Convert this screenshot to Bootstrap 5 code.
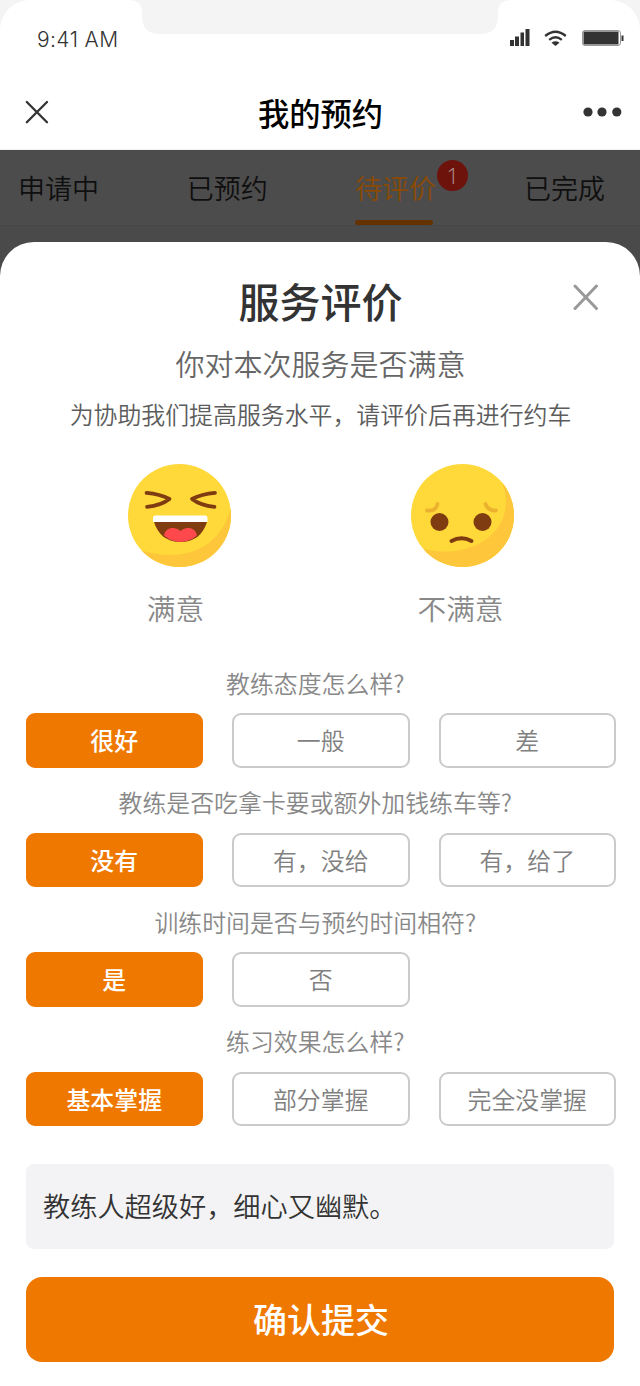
<!DOCTYPE html>
<html lang="zh-CN">
<head>
<meta charset="utf-8">
<meta name="viewport" content="width=device-width, initial-scale=1">
<title>我的预约</title>
<link href="https://cdn.jsdelivr.net/npm/bootstrap@5.3.0/dist/css/bootstrap.min.css" rel="stylesheet">
<style>
:root{--brand:#ef7800;--ink:#333;--soft:#888}
body{font-family:"Noto Sans CJK SC",sans-serif;background:#f4f4f4;color:var(--ink)}
.screen{height:1386px;overflow:hidden}
.top{border-radius:30px 30px 0 0}
.backdrop-dim{background:#4a4a4a}
.status{height:77px;padding:0 16px 0 37px}
.clock{font:300 21px/79px Inter,sans-serif;letter-spacing:.4px}
.notch{left:130px;top:0}
.topbar{height:73px;padding:0 18px 0 24px;border-bottom:1px solid #f1f1f1}
.topbar h1{font-size:31.3px;line-height:40px;font-weight:500;color:#000;left:1px;right:0;top:16px}
.tabs{height:76px;padding:0 35px 0 18px;background:#4c4c4c;border-bottom:1px solid #474747}
.tabs .nav-link{padding:0;font-size:27px;line-height:76px;font-weight:350;color:#0f0f0f}
.tabs .nav-link.active{color:#8a4a05}
.tabs .active::after{content:"";position:absolute;left:0;top:70px;width:78px;height:5px;border-radius:3px;background:#633200}
.count{left:82px;top:10px;width:31px;height:31px;font:300 22px/31px "Open Sans",sans-serif;background:#6e120c;color:#b09592}
.sheet{margin-top:16px;height:1144px;border-radius:34px 34px 0 0;padding:31px 26px 0}
.sheet h2{font-size:41px;line-height:54px;font-weight:500;padding-left:1px}
.dismiss{right:40px;top:42px}
.lead-q{font-size:29px;line-height:40px;font-weight:350;color:#666;margin-top:16px;padding-left:1px}
.note{font-size:23.9px;line-height:34px;font-weight:350;color:#5c5c5c;margin-top:14px;padding-left:1px;white-space:nowrap}
.faces{margin:33px 100px 0 102px}
.face-label{font-size:28.7px;line-height:40px;font-weight:350;color:var(--soft);margin:21px -10px 0}
.questions{margin:37.500px -1px 0 -.5px}
.ask{height:47.5px;padding:0 10px 0 0;font-size:23.9px;line-height:33px;font-weight:350;color:var(--soft)}
.choices{display:grid;grid-template-columns:repeat(3,177.5px);gap:29px;margin-bottom:17.5px}
.choices .btn{height:54.5px;padding:0;border:2px solid #cbcbcb;border-radius:9px;font-size:23.9px;line-height:50px;font-weight:350;color:#808080}
.choices .btn.active{background:var(--brand);border-color:var(--brand);color:#fff;font-weight:500}
.comment{height:85px;margin-top:37.500px;padding:0 17px;border-radius:8px;background:#f3f3f5;font-size:27.2px;line-height:83px;font-weight:350}
.submit{height:85px;margin-top:28px;padding:6px 0 6px 2px;border:0;border-radius:16px;background:var(--brand);color:#fff;font-size:34px;line-height:50px;font-weight:500}
</style>
</head>
<body>
<main class="screen">
  <header class="top bg-white">
    <div class="status position-relative d-flex justify-content-between">
      <span class="clock">9:41 AM</span>
      <svg class="notch position-absolute" width="380" height="34" viewBox="0 0 380 34"><path d="M0 0Q12 1 12 12V16Q12 34 30 34H350Q368 34 368 16V12Q368 1 380 0Z" fill="#f4f4f4"/></svg>
      <svg width="116" height="24" viewBox="508 26 116 24" style="margin-top:26px" fill="#333">
        <path d="M510 40h4v6h-4zM515 36.500h4v9.500h-4zM520.500 32.500h3.500v13.500h-3.500zM525.500 29h4v17h-4z"/>
        <g fill="none" stroke="#333" stroke-width="2.300"><path d="M545.200 36Q555.500 27.500 565.800 36M549.200 39.800Q555.500 34.800 561.800 39.800"/></g>
        <path d="M551.500 42.700Q555.500 39.800 559.500 42.700L555.500 46Z"/>
        <rect x="582.500" y="30.500" width="38" height="15" rx="2.500" fill="#fff" stroke="#999"/><rect x="583.500" y="31.500" width="35" height="13"/><path d="M621.500 35.500h2v5.500h-2z"/>
      </svg>
    </div>
    <div class="topbar position-relative d-flex justify-content-between">
      <svg width="26" height="26" style="margin-top:22px" viewBox="0 0 26 26" stroke="#333" stroke-width="2.300" stroke-linecap="round"><path d="M2.800 3L23 23.200M23 3L2.800 23.200"/></svg>
      <h1 class="position-absolute text-center m-0">我的预约</h1>
      <svg width="40" height="12" style="margin-top:29px" viewBox="0 0 40 12" fill="#333"><circle cx="6" cy="6" r="4.600"/><circle cx="20" cy="6" r="4.600"/><circle cx="34.800" cy="6" r="4.600"/></svg>
    </div>
  </header>
  <div class="backdrop-dim">
  <nav class="tabs nav flex-nowrap justify-content-between">
    <a class="nav-link">申请中</a>
    <a class="nav-link">已预约</a>
    <a class="nav-link active position-relative">待评价<span class="count position-absolute rounded-circle text-center">1</span></a>
    <a class="nav-link">已完成</a>
  </nav>
  <section class="sheet bg-white position-relative">
    <svg class="dismiss position-absolute" width="28" height="28" viewBox="0 0 28 28" stroke="#999" stroke-width="3" stroke-linecap="round"><path d="M3 2L24.500 24.500M24.500 2L3 24.500"/></svg>
    <h2 class="text-center m-0">服务评价</h2>
    <p class="lead-q text-center mb-0">你对本次服务是否满意</p>
    <p class="note text-center mb-0">为协助我们提高服务水平，请评价后再进行约车</p>
    <div class="faces d-flex justify-content-between">
      <div>
        <svg class="d-block" width="103" height="103" viewBox="0 0 103 103">
          <clipPath id="disc"><circle cx="51.500" cy="51.500" r="51.500"/></clipPath>
          <g clip-path="url(#disc)"><path d="M0 0H103V103H0Z" fill="#ffd83a"/><path d="M12 86C50 98 90 90 103 44V103H0Z" fill="#fec63a"/></g>
          <path d="M18.500 28.800Q32 30 41.500 35Q33 41.500 19 42.800M87 28.800Q73.500 30 64 35Q72.500 41.500 86.500 42.800" fill="none" stroke="#803c11" stroke-width="3.700" stroke-linecap="round" stroke-linejoin="round"/>
          <path d="M26 58H79C75 71 66 78 52.500 78S30 71 26 58Z" fill="#803c11"/>
          <path d="M36 71.500C38 62 48 63 52.500 67C57 63 67 62 69 71.500C60 80 45 80 36 71.500Z" fill="#ff484b"/>
          <path d="M27.500 51.500H77Q79.500 51.500 79.500 54V58H25V54Q25 51.500 27.500 51.500Z" fill="#fff"/>
        </svg>
        <p class="face-label text-center pe-2">满意</p>
      </div>
      <div>
        <svg class="d-block" width="103" height="103" viewBox="0 0 103 103">
          <g clip-path="url(#disc)"><path d="M0 0H103V103H0Z" fill="#ffd83a"/><path d="M13 85C62 97 109 66 91 17L103 18V103H0Z" fill="#fec63a"/></g>
          <g fill="none" stroke="#ebb22d" stroke-width="3.800" stroke-linecap="round"><path d="M16 46.500Q25 47.500 26.500 40M74.500 40Q77 47 85 46.500"/></g>
          <circle cx="28.500" cy="58" r="9" fill="#803c11"/><circle cx="71.500" cy="58" r="9" fill="#803c11"/>
          <path d="M40.500 77Q50.500 71.500 60.500 77" fill="none" stroke="#803c11" stroke-width="4" stroke-linecap="round"/>
        </svg>
        <p class="face-label text-center pe-1">不满意</p>
      </div>
    </div>
    <div class="questions">
      <div class="ask text-center">教练态度怎么样?</div>
      <div class="choices"><button class="btn active">很好</button><button class="btn">一般</button><button class="btn">差</button></div>
      <div class="ask text-center">教练是否吃拿卡要或额外加钱练车等?</div>
      <div class="choices"><button class="btn active">没有</button><button class="btn">有，没给</button><button class="btn">有，给了</button></div>
      <div class="ask text-center">训练时间是否与预约时间相符?</div>
      <div class="choices"><button class="btn active">是</button><button class="btn">否</button></div>
      <div class="ask text-center">练习效果怎么样?</div>
      <div class="choices mb-0"><button class="btn active">基本掌握</button><button class="btn">部分掌握</button><button class="btn">完全没掌握</button></div>
    </div>
    <div class="comment">教练人超级好，细心又幽默。</div>
    <button class="submit btn w-100">确认提交</button>
  </section>
  </div>
</main>
<script src="https://cdn.jsdelivr.net/npm/bootstrap@5.3.0/dist/js/bootstrap.bundle.min.js"></script>
</body>
</html>
